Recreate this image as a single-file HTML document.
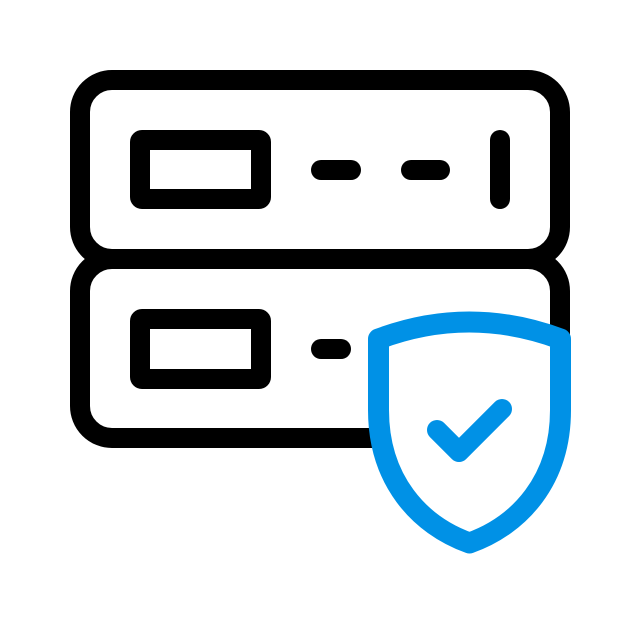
<!DOCTYPE html>
<html><head><style>html,body{margin:0;padding:0;background:#fff;}svg{display:block}</style></head>
<body>
<svg width="640" height="640" viewBox="0 0 640 640" xmlns="http://www.w3.org/2000/svg">
<g fill="none" stroke="#000" stroke-width="20" stroke-linecap="round" stroke-linejoin="round">
<rect x="80" y="80" width="480" height="179" rx="32"/>
<rect x="80" y="259" width="480" height="179" rx="32"/>
<rect x="140" y="140" width="121" height="59" rx="2"/>
<rect x="140" y="319" width="121" height="60" rx="2"/>
<line x1="321" y1="170" x2="351" y2="170"/>
<line x1="411" y1="170" x2="440" y2="170"/>
<line x1="500" y1="140" x2="500" y2="199"/>
<line x1="321" y1="349" x2="341" y2="349"/>
</g>
<path d="M378.5,339 Q469,305 560.5,339 L560.5,410 C560.5,480 520,525 469.5,543 C419,525 378.5,480 378.5,410 Z" fill="#fff" stroke="#0091E6" stroke-width="21" stroke-linejoin="round"/>
<polyline points="437,430 459,452 502,409" fill="none" stroke="#0091E6" stroke-width="20" stroke-linecap="round" stroke-linejoin="round"/>
</svg>
</body></html>
